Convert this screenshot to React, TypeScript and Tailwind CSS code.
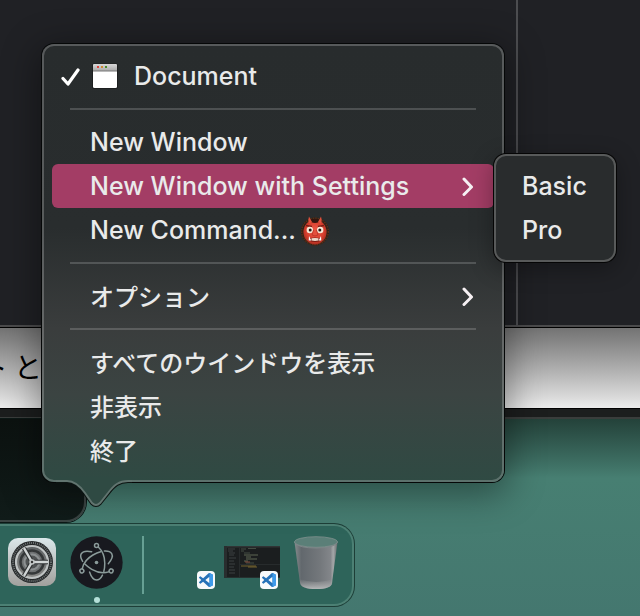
import type { ReactNode } from "react";

const rowText =
  "font-['Inter','Liberation_Sans','Noto_Sans_CJK_JP',sans-serif] text-[25px] font-medium leading-[44px] text-[#e9eaea]";
const rowTextJa =
  "font-['Noto_Sans_CJK_JP',sans-serif] text-2xl font-medium leading-[44px] text-[#e9eaea]";

function Chevron() {
  return (
    <svg viewBox="0 0 12 20" className="ml-auto h-5 w-3" aria-hidden="true">
      <path d="M2 3 9.500 11 2 18.500" fill="none" stroke="#f6f0f3" strokeWidth="3" strokeLinecap="round" strokeLinejoin="round" />
    </svg>
  );
}

function Item({ children, ja, active, submenu }: { children: ReactNode; ja?: boolean; active?: boolean; submenu?: boolean }) {
  return (
    <button
      type="button"
      role="menuitem"
      aria-haspopup={submenu ? "menu" : undefined}
      className={`mx-2 flex h-11 items-center rounded-md pr-5 pl-[38px] text-left whitespace-nowrap ${active ? "bg-[#a33d65]" : ""} ${ja ? rowTextJa : rowText}`}
    >
      {children}
      {submenu && <Chevron />}
    </button>
  );
}

function Separator() {
  return (
    <div role="separator" className="flex h-[22px] items-center px-[26px]">
      <div className="h-0.5 w-full bg-[#ffffff2c]" />
    </div>
  );
}

function Check() {
  return (
    <svg viewBox="0 0 20 20" className="h-5 w-5" aria-hidden="true">
      <path d="M3 12.500 8 18 18 4" fill="none" stroke="#fff" strokeWidth="3.200" strokeLinecap="round" strokeLinejoin="round" />
    </svg>
  );
}

function WindowIcon() {
  return (
    <svg viewBox="0 0 26 26" className="ml-3 h-[26px] w-[26px]" aria-hidden="true">
      <defs>
        <linearGradient id="bar" x2="0" y2="1">
          <stop offset="0" stopColor="#d8d8d8" />
          <stop offset="1" stopColor="#a9a9a9" />
        </linearGradient>
      </defs>
      <rect x="0" y="0.500" width="26" height="25.500" rx="2" fill="#111" opacity=".5" />
      <rect x="1" y="1" width="24" height="24" rx="1.500" fill="#fff" />
      <path d="M1 8V2.500Q1 1 2.500 1h21Q25 1 25 2.500V8z" fill="url(#bar)" />
      <path d="M1 8h24" stroke="#777" />
      <rect x="5" y="3" width="2" height="2" fill="#e0443e" />
      <rect x="9" y="3" width="2" height="2" fill="#d08a32" />
      <rect x="13" y="3" width="2" height="2" fill="#4b8a2c" />
    </svg>
  );
}

function Ogre() {
  return (
    <svg viewBox="0 0 30 32" className="ml-1 h-8 w-[30px]" role="img" aria-label="Ogre">
      <defs>
        <radialGradient id="ogre" cx=".5" cy=".45" r=".58">
          <stop offset="0" stopColor="#ef5a48" />
          <stop offset=".65" stopColor="#d8402f" />
          <stop offset="1" stopColor="#a32a1c" />
        </radialGradient>
      </defs>
      <circle cx="15" cy="17.500" r="14" fill="#2f2218" />
      <circle cx="15" cy="17.500" r="13.300" fill="none" stroke="#5a3119" strokeWidth="1.400" strokeDasharray="1.500 1" />
      <ellipse cx="15" cy="18" rx="11.600" ry="12.500" fill="url(#ogre)" />
      <path d="M9.500 6q5.500-2.500 11 0-1.500 3-5.500 3t-5.500-3z" fill="#33160f" />
      <path d="M9 2.500 12 8l-3 1.500q-1.500-3 0-7zM21 2.500 18 8l3 1.500q1.500-3 0-7z" fill="#e0503c" />
      <path d="m6 11.500 6 1M24 11.500l-6 1" stroke="#7c1f14" strokeWidth="1.400" />
      <circle cx="9.800" cy="16" r="3.200" fill="#f6ead8" />
      <circle cx="20.200" cy="16" r="3.200" fill="#f6ead8" />
      <circle cx="10.200" cy="16" r="1.500" fill="#241714" />
      <circle cx="19.800" cy="16" r="1.500" fill="#241714" />
      <path d="M13.500 16 12 21q3 1.800 6 0l-1.500-5" fill="#e4503d" stroke="#b52f22" strokeWidth=".7" />
      <path d="M9 25.500q.5-2 6-2t6 2q-1 2.500-6 2.500t-6-2.500z" fill="#7a1c16" />
      <path d="M11.500 24.300q3.500-.8 7 0v2.200q-3.500.8-7 0z" fill="#efd9ca" />
      <path d="m8.700 26.500.3-4.500 2.300 4.500zM21.300 26.500l-.3-4.500-2.300 4.500z" fill="#fff" />
    </svg>
  );
}

function Pointer() {
  const edge = "M0 4H11C19 4 24 9 29 16L36 26Q40 30 44 26L52 16C58 8 63 4 72 4H76";
  return (
    <svg viewBox="0 0 76 32" className="absolute top-[431px] left-3 h-8 w-[76px]" aria-hidden="true">
      <path d={edge} fill="none" stroke="#0c1412" strokeWidth="4" />
      <path d={`${edge}V0H0Z`} fill="#2f4a43" />
      <path d={edge} fill="none" stroke="#61746f" strokeWidth="2" />
    </svg>
  );
}

function SettingsIcon() {
  return (
    <svg viewBox="0 0 48 48" className="h-12 w-12" aria-hidden="true">
      <defs>
        <linearGradient id="tile" x2="0" y2="1">
          <stop offset="0" stopColor="#dbe7ea" />
          <stop offset="1" stopColor="#a2a09d" />
        </linearGradient>
        <linearGradient id="metal" x2="0" y2="1">
          <stop offset="0" stopColor="#5c6062" />
          <stop offset="1" stopColor="#8a8a88" />
        </linearGradient>
      </defs>
      <rect width="48" height="48" rx="10" fill="url(#tile)" />
      <circle cx="24" cy="24" r="21" fill="#26292a" />
      <circle cx="24" cy="24" r="19" fill="none" stroke="#6d7273" strokeWidth="2" strokeDasharray="1 1" />
      <circle cx="24" cy="24" r="16" fill="url(#metal)" stroke="#bfc3c3" strokeWidth="2.200" />
      <circle cx="24" cy="24" r="11.500" fill="#6f7273" stroke="#343738" strokeWidth="2.500" />
      <circle cx="24" cy="24" r="7.500" fill="#505354" stroke="#8c9091" strokeWidth="2" />
      <path d="M24 24h16M24 24 16 10.200M24 24 16 37.800" stroke="#303334" strokeWidth="4.500" />
      <path d="M24 24h16M24 24 16 10.200M24 24 16 37.800" stroke="#d0d4d4" strokeWidth="2.400" />
      <circle cx="24" cy="24" r="2.800" fill="#c3c7c7" />
      <circle cx="24" cy="24" r="1.200" fill="#333" />
    </svg>
  );
}

function ElectronIcon() {
  return (
    <svg viewBox="-80 -80 160 160" className="h-[53px] w-[53px]" fill="none" stroke="#8b9b9a" strokeWidth="4.500" strokeLinecap="round" aria-hidden="true">
      <circle r="79" fill="#18191f" stroke="none" />
      {[0, 120, 240].map((angle) => (
        <g key={angle} transform={`rotate(${angle})`}>
          <circle cy="-51" r="6" />
          <path d="M6 -46C18 -35 25 -15 25 2C25 12 24 20 22 27" />
          <path d="M-21 29C-16 44 -8 53 0 53C8 53 14 46 18 38" />
        </g>
      ))}
      <circle r="5.500" fill="#8b9b9a" stroke="none" />
    </svg>
  );
}

function CodeBadge() {
  return (
    <span className="flex h-[18px] w-[18px] items-center justify-center rounded bg-[#f8fafb]">
      <svg viewBox="0 0 24 24" className="h-3.5 w-3.5" aria-hidden="true">
        <path
          fill="#2672b8"
          d="M23.150 2.587 18.210.21a1.494 1.494 0 0 0-1.705.29l-9.460 8.630-4.120-3.128a.999.999 0 0 0-1.276.057L.327 7.261A1 1 0 0 0 .326 8.740L3.899 12 .326 15.260a1 1 0 0 0 .001 1.479L1.650 17.940a.999.999 0 0 0 1.276.057l4.120-3.128 9.460 8.630a1.492 1.492 0 0 0 1.704.290l4.942-2.377A1.500 1.500 0 0 0 24 20.060V3.939a1.500 1.500 0 0 0-.850-1.352zm-5.146 14.861L10.826 12l7.178-5.448v10.896z"
        />
        <path fill="#3f9bea" d="M18 .2 23.150 2.600Q24 3 24 4v16q0 1-.850 1.400L18 23.800z" />
      </svg>
    </span>
  );
}

function EditorPreview() {
  return (
    <svg viewBox="0 0 56 32" className="h-8 w-14" aria-hidden="true">
      <rect width="56" height="32" fill="#1b1e1f" />
      <rect width="56" height="1.500" fill="#303435" />
      <rect width="3" height="32" fill="#292d2e" />
      <path d="M4 3h7M4 5h5M5 7h6M5 9h5M5 12h7M5 15h5M5 18h6M5 21h5M5 24h6M5 27h6" stroke="#4b5051" strokeWidth=".7" />
      <path d="M15.500 2v30" stroke="#303435" strokeWidth=".6" />
      <path d="M17 3h5M24 2.500h8M17 5h3M20 7h6M22 17h8" stroke="#566155" strokeWidth=".7" />
      <path d="M20 9h14M22 11h5M22 13h11M20 15h4" stroke="#66705a" strokeWidth=".9" />
      <path d="M17 20h15M24 21h9" stroke="#8a7434" strokeWidth=".8" />
      <path d="M21 16h5" stroke="#9b4f3c" strokeWidth=".8" />
      <path d="M16 18.500h40" stroke="#303435" strokeWidth=".6" />
      <rect y="31" width="56" height="1" fill="#26302f" />
    </svg>
  );
}

function Trash() {
  return (
    <svg viewBox="0 0 44 54" className="h-[54px] w-11" aria-hidden="true">
      <defs>
        <linearGradient id="bin">
          <stop offset="0" stopColor="#858b8d" />
          <stop offset=".16" stopColor="#62686d" />
          <stop offset=".6" stopColor="#74787c" />
          <stop offset=".84" stopColor="#83868a" />
          <stop offset=".9" stopColor="#a4a7a8" />
          <stop offset="1" stopColor="#666c6e" />
        </linearGradient>
        <linearGradient id="base" x2="0" y2="1">
          <stop offset="0" stopColor="#aaa" stopOpacity="0" />
          <stop offset="1" stopColor="#b5b7b8" />
        </linearGradient>
      </defs>
      <path d="M.5 6 6 47q1 6 16 6t16-6l5.500-41z" fill="url(#bin)" />
      <path d="m5.400 43 .8 4q1 6 16 6t16-6l.6-4q-16 6-33.400 0z" fill="url(#base)" />
      <ellipse cx="22" cy="6" rx="21.500" ry="5.300" fill="#5b7f78" stroke="#82928f" strokeWidth=".8" />
      <path d="M1 7q4 5 21 5t21-5" fill="none" stroke="#7d8688" strokeWidth="1" />
    </svg>
  );
}

function Backdrop() {
  return (
    <div className="flex h-full flex-col bg-[#447d70]">
      <div className="flex h-[328px] border-b border-black">
        <div className="w-[516px] shrink-0 border-b-2 border-[#4b4b4c] bg-[#202125]" />
        <div className="grow border-b-2 border-l-2 border-b-[#4b4b4c] border-l-[#4c4d50] bg-[#202125]" />
      </div>
      <div className="flex h-20 items-center bg-linear-to-b from-[#737373] to-[#ebebeb] pb-1">
        <p className="flex w-[42px] shrink-0 justify-end font-['Noto_Sans_CJK_JP',sans-serif] text-[28px] leading-none whitespace-pre text-black">ト と</p>
      </div>
      <div className="h-[11px] shrink-0 border-t border-b-2 border-t-black border-b-[#3a3d3c] bg-[#1c1e1e] shadow-[0_1px_0_#050a09]" />
      <div className="flex grow items-start bg-linear-to-b from-[#24423a] via-[#477f72] via-30% to-[#44776f]">
        <div className="h-[103px] w-[86px] rounded-br-[20px] border-r-2 border-b-2 border-[#3b4443] bg-linear-to-b from-[#0c1210] to-[#101b19] shadow-[0_0_0_1px_#0c1816]" />
      </div>
    </div>
  );
}

export default function App() {
  return (
    <main className="relative h-screen min-h-[616px] overflow-hidden">
      <div className="absolute inset-0">
        <Backdrop />
      </div>

      <nav
        aria-label="Dock"
        className="absolute top-[524px] left-0 flex h-[82px] items-start rounded-r-[20px] border-2 border-l-0 border-[#4c8074] bg-[#2e645a] pr-[14px] pl-2 shadow-[0_0_0_1px_#1d3e37]"
      >
        <button type="button" aria-label="System Settings" className="mt-3">
          <SettingsIcon />
        </button>
        <button type="button" aria-label="Electron" className="mt-[10px] ml-[14px] flex flex-col items-center gap-2">
          <ElectronIcon />
          <span className="h-1.5 w-1.5 rounded-full bg-[#b5e0d8]" />
        </button>
        <div className="mt-[10px] ml-[19px] h-[58px] w-0.5 bg-[#67a094]" />
        <button type="button" aria-label="Minimized window" className="mt-[45px] ml-[53px]">
          <CodeBadge />
        </button>
        <button type="button" aria-label="Visual Studio Code window" className="relative mt-5 ml-[9px]">
          <EditorPreview />
          <span className="absolute top-[25px] left-9">
            <CodeBadge />
          </span>
        </button>
        <button type="button" aria-label="Trash" className="mt-[10px] ml-[14px]">
          <Trash />
        </button>
      </nav>

      <div
        role="menu"
        aria-label="Dock menu"
        className="absolute top-11 left-[42px] flex w-[462px] flex-col rounded-xl border-2 border-[#ffffff38] bg-[linear-gradient(#282c2d_0%,#292d2e_42%,#3a3d3d_65%,#3b4442_80%,#2f4a43_100%)] bg-origin-border py-2 shadow-[0_0_0_1px_#050707,0_8px_36px_4px_#00000066]"
      >
        <button
          type="button"
          role="menuitemcheckbox"
          aria-checked="true"
          className={`mx-2 flex h-11 items-center pl-2 text-left ${rowText}`}
        >
          <Check />
          <WindowIcon />
          <span className="ml-4">Document</span>
        </button>
        <Separator />
        <Item>New Window</Item>
        <Item active submenu>New Window with Settings</Item>
        <Item>
          New Command...
          <Ogre />
        </Item>
        <Separator />
        <Item ja submenu>オプション</Item>
        <Separator />
        <Item ja>すべてのウインドウを表示</Item>
        <Item ja>非表示</Item>
        <Item ja>終了</Item>
        <Pointer />
      </div>

      <div
        role="menu"
        aria-label="New Window with Settings"
        className="absolute top-[154px] left-[494px] flex w-[122px] flex-col rounded-xl border-2 border-[#585a5a] bg-[#292c2d] py-2 shadow-[0_0_0_1px_#050505,0_6px_24px_#00000055]"
      >
        {["Basic", "Pro"].map((label) => (
          <button key={label} type="button" role="menuitem" className={`h-11 pl-[26px] text-left ${rowText}`}>
            {label}
          </button>
        ))}
      </div>
    </main>
  );
}
